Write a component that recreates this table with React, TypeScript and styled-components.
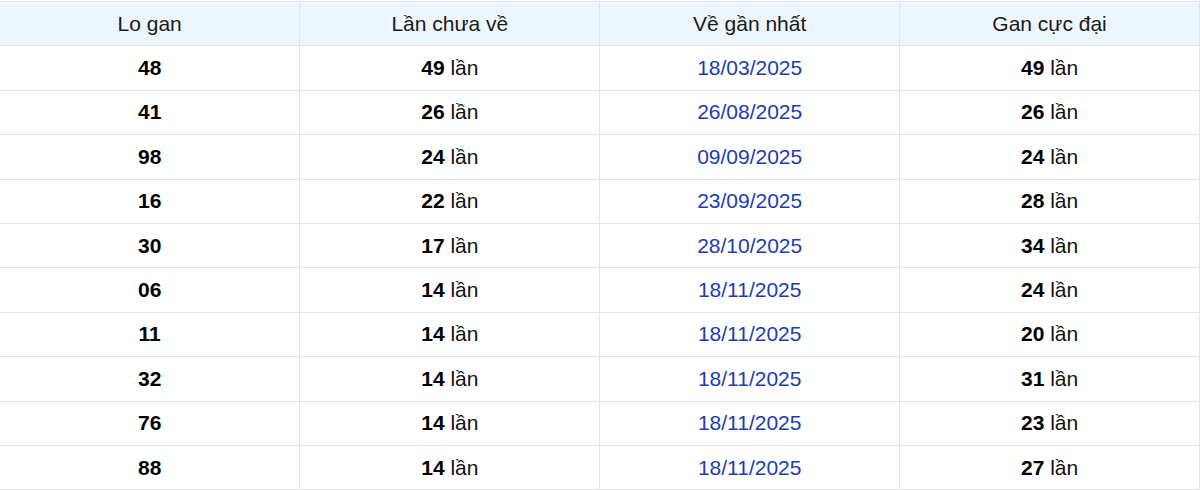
import styled, { createGlobalStyle } from 'styled-components';

const GlobalStyle = createGlobalStyle`
  html, body {
    margin: 0;
    padding: 0;
    background: #fff;
  }
  body {
    font-family: "Liberation Sans", Arial, sans-serif;
    color: #222;
  }
`;

const Wrapper = styled.div`
  width: 1200px;
  padding-top: 1px;
  overflow: hidden;
`;

const Table = styled.table`
  width: 1200px;
  border-collapse: collapse;
  table-layout: fixed;
  font-size: 21px;
`;

const HeadCell = styled.th`
  height: 43.4px;
  padding: 0;
  font-weight: normal;
  text-align: center;
  color: #1a1a1a;
  background: #eef6fd;
  border: 1px solid #e4e4e4;
  &:first-child {
    border-left: none;
  }
`;

const Cell = styled.td`
  height: 43.4px;
  padding: 0;
  text-align: center;
  color: #111;
  border: 1px solid #e4e4e4;
  &:first-child {
    border-left: none;
  }
`;

const Num = styled.b`
  font-weight: bold;
  color: #000;
`;

const DateText = styled.span<{ $color?: string }>`
  color: ${(p) => p.$color || '#1b3db4'};
`;

const rows = [
  { lo: '48', cur: 49, last: '18/03/2025', max: 49 },
  { lo: '41', cur: 26, last: '26/08/2025', max: 26 },
  { lo: '98', cur: 24, last: '09/09/2025', max: 24 },
  { lo: '16', cur: 22, last: '23/09/2025', max: 28 },
  { lo: '30', cur: 17, last: '28/10/2025', max: 34 },
  { lo: '06', cur: 14, last: '18/11/2025', max: 24 },
  { lo: '11', cur: 14, last: '18/11/2025', max: 20 },
  { lo: '32', cur: 14, last: '18/11/2025', max: 31 },
  { lo: '76', cur: 14, last: '18/11/2025', max: 23 },
  { lo: '88', cur: 14, last: '18/11/2025', max: 27 },
];

export default function App() {
  return (
    <Wrapper>
      <GlobalStyle />
      <Table>
        <thead>
          <tr>
            <HeadCell>Lo gan</HeadCell>
            <HeadCell>Lần chưa về</HeadCell>
            <HeadCell>Về gần nhất</HeadCell>
            <HeadCell>Gan cực đại</HeadCell>
          </tr>
        </thead>
        <tbody>
          {rows.map((r, i) => (
            <tr key={i}>
              <Cell>
                <Num>{r.lo}</Num>
              </Cell>
              <Cell>
                <Num>{r.cur}</Num> lần
              </Cell>
              <Cell>
                <DateText>{r.last}</DateText>
              </Cell>
              <Cell>
                <Num>{r.max}</Num> lần
              </Cell>
            </tr>
          ))}
        </tbody>
      </Table>
    </Wrapper>
  );
}
